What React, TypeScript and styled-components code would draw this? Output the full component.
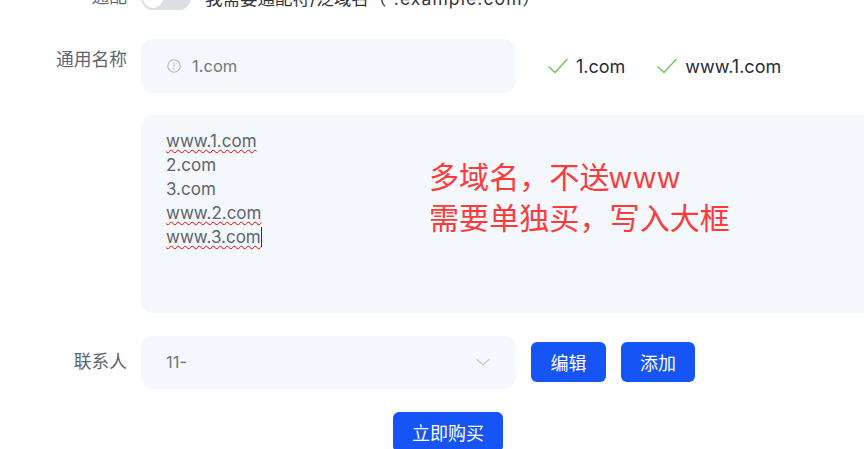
import React from "react"
import styled, { createGlobalStyle } from "styled-components"

const GlobalStyle = createGlobalStyle`
  html, body {
    margin: 0;
    padding: 0;
    background: #fff;
    overflow: hidden;
  }
  body {
    font-family: "Inter", "Noto Sans CJK SC", sans-serif;
  }
`

const Page = styled.div`
  width: 864px;
  height: 449px;
  overflow: hidden;
`

const Form = styled.div`
  margin-top: -15px;
  display: flex;
  flex-direction: column;
`

const Row = styled.div<{ $gap: number }>`
  display: grid;
  grid-template-columns: 127px 1fr;
  column-gap: 14px;
  margin-bottom: ${(props) => props.$gap}px;
`

const Label = styled.div<{ $top?: number }>`
  text-align: right;
  font-size: 17.75px;
  line-height: 24px;
  color: #5e6470;
  padding-top: ${(props) => props.$top ?? 0}px;
`

const Inline = styled.div`
  display: flex;
  align-items: center;
`

const Switch = styled.div`
  width: 50px;
  height: 24px;
  border-radius: 12px;
  background: #dcdfe6;
  position: relative;
  flex: none;
  &::after {
    content: "";
    position: absolute;
    left: 2px;
    top: 2px;
    width: 20px;
    height: 20px;
    border-radius: 50%;
    background: #fff;
  }
`

const SwitchText = styled.span`
  margin-left: 14px;
  font-size: 17.5px;
  color: #30333a;
  white-space: nowrap;
`

const SwitchExample = styled.span`
  letter-spacing: 1.1px;
`

const InputBox = styled.div`
  width: 375px;
  height: 54px;
  box-sizing: border-box;
  padding: 0 25px;
  background: #f4f7fb;
  border-radius: 12px;
  display: flex;
  align-items: center;
  font-size: 16.5px;
  color: #71757d;
`

const HintIcon = styled.svg`
  width: 16px;
  height: 16px;
  margin-right: 10px;
  flex: none;
`

const Checks = styled.div`
  display: flex;
  align-items: center;
  margin-left: 31px;
  gap: 31px;
`

const CheckItem = styled.div`
  display: flex;
  align-items: center;
  gap: 7px;
  font-size: 18px;
  color: #252b3a;
`

const BigBox = styled.div`
  height: 198px;
  box-sizing: border-box;
  padding: 14px 25px;
  background: #f4f7fb;
  border-radius: 12px 0 0 12px;
  position: relative;
  font-size: 17px;
  line-height: 24px;
  color: #60646c;
`

const Line = styled.div`
  height: 24px;
`

const Misspelled = styled.span<{ $caret?: boolean }>`
  text-decoration: underline wavy #f00000 1.2px;
  text-underline-offset: 2px;
  ${(props) => props.$caret && "border-right: 1px solid #30333a;"}
`

const Note = styled.div`
  position: absolute;
  left: 288px;
  top: 42px;
  font-family: "Liberation Sans", "Noto Sans CJK SC", sans-serif;
  font-size: 30.1px;
  line-height: 41px;
  color: #fb3b3b;
  white-space: nowrap;
`

const NoteLatin = styled.span`
  letter-spacing: 2.4px;
`

const SelectBox = styled(InputBox)`
  height: 53px;
  justify-content: space-between;
  padding-right: 25px;
  padding-bottom: 2px;
`

const Blue = styled.button<{ $w: number; $h: number }>`
  width: ${(props) => props.$w}px;
  height: ${(props) => props.$h}px;
  border: none;
  padding: 0;
  background: #1654f5;
  color: #fff;
  border-radius: 6px;
  font-family: inherit;
  font-size: 18px;
  flex: none;
`

const Actions = styled.div`
  display: flex;
  gap: 15px;
  margin-left: 15px;
  padding-bottom: 1px;
`

const Footer = styled.div`
  display: flex;
  justify-content: center;
  padding-left: 32px;
`

const Check = () => (
  <svg width="22" height="18" viewBox="0 0 22 18" fill="none">
    <path d="M1.5 9.5 L8 15.5 L20.5 2" stroke="#72c05f" strokeWidth="1.4" />
  </svg>
)

export default function App() {
  return (
    <Page>
      <GlobalStyle />
      <Form>
        <Row $gap={29}>
          <Label>通配</Label>
          <Inline>
            <Switch />
            <SwitchText>
              我需要通配符/泛域名（<SwitchExample>*.example.com</SwitchExample>）
            </SwitchText>
          </Inline>
        </Row>
        <Row $gap={22}>
          <Label $top={9}>通用名称</Label>
          <Inline>
            <InputBox>
              <HintIcon viewBox="0 0 16 16" fill="none">
                <circle cx="8" cy="8" r="6.2" stroke="#b4b7bd" strokeWidth="1.1" />
                <path d="M8 4.6 V8.8 M8 10 V11.2" stroke="#b4b7bd" strokeWidth="1.1" />
              </HintIcon>
              1.com
            </InputBox>
            <Checks>
              <CheckItem>
                <Check />
                1.com
              </CheckItem>
              <CheckItem>
                <Check />
                www.1.com
              </CheckItem>
            </Checks>
          </Inline>
        </Row>
        <Row $gap={23}>
          <div />
          <BigBox>
            <Line><Misspelled>www.1.com</Misspelled></Line>
            <Line>2.com</Line>
            <Line>3.com</Line>
            <Line><Misspelled>www.2.com</Misspelled></Line>
            <Line><Misspelled $caret>www.3.com</Misspelled></Line>
            <Note>
              多域名，不送<NoteLatin>www</NoteLatin>
              <br />
              需要单独买，写入大框
            </Note>
          </BigBox>
        </Row>
        <Row $gap={23}>
          <Label $top={14}>联系人</Label>
          <Inline>
            <SelectBox>
              11-
              <svg width="16" height="10" viewBox="0 0 16 10" fill="none">
                <path d="M1.5 2 L8 8 L14.5 2" stroke="#c4c7cc" strokeWidth="1.2" />
              </svg>
            </SelectBox>
            <Actions>
              <Blue $w={75} $h={40}>编辑</Blue>
              <Blue $w={74} $h={40}>添加</Blue>
            </Actions>
          </Inline>
        </Row>
        <Footer>
          <Blue $w={110} $h={40}>立即购买</Blue>
        </Footer>
      </Form>
    </Page>
  )
}
